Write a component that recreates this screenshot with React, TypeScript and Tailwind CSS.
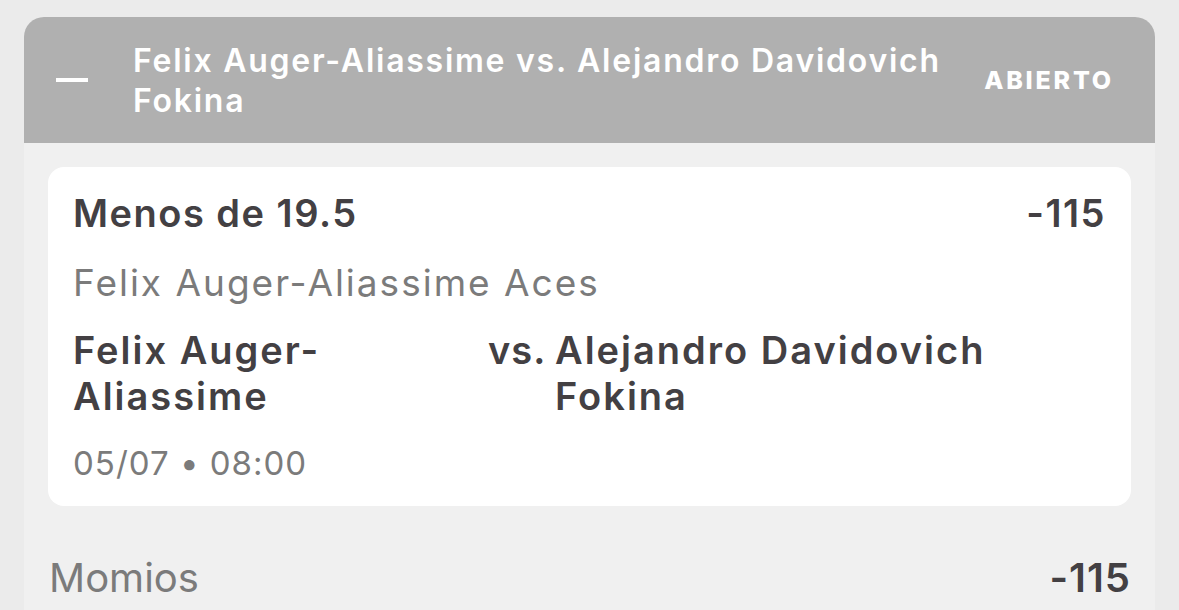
import React from "react";

const pick = {
  line: "Menos de 19.5",
  odds: "-115",
  market: "Felix Auger-Aliassime Aces",
  home: "Felix Auger-Aliassime",
  away: "Alejandro Davidovich Fokina",
  date: "05/07 • 08:00",
};

export default function App() {
  return (
    <div
      className="min-h-[610px] bg-[#ebebeb] px-[24px] pt-[17px]"
      style={{ fontFamily: "Inter, 'Noto Sans', sans-serif" }}
    >
      <div className="overflow-hidden rounded-t-[20px] bg-[#f0f0f0]">
        {/* header bar */}
        <div className="flex h-[126px] items-center bg-[#b0b0b0] pr-[41px] text-white">
          <div className="ml-[32px] h-[4px] w-[32px] bg-white" />
          <div className="ml-[45px] w-[840px] pt-[2px] text-[32px] font-semibold leading-[40px] tracking-[1.75px]">
            Felix Auger-Aliassime vs. Alejandro Davidovich Fokina
          </div>
          <div className="ml-auto pt-[2px] text-[25px] font-extrabold tracking-[2.8px]">ABIERTO</div>
        </div>

        {/* selection card */}
        <div className="px-[24px] pt-[24px]">
          <div className="rounded-[16px] bg-white px-[25px] pb-[23px] pt-[24px] text-[#434043]">
            <div className="flex items-center justify-between text-[38px] font-semibold leading-[44px] tracking-[1.5px]">
              <span>{pick.line}</span>
              <span>{pick.odds}</span>
            </div>
            <div className="mt-[26px] text-[37px] leading-[44px] tracking-[2px] text-[#7b7b7b]">
              {pick.market}
            </div>
            <div className="mt-[22px] flex text-[38px] font-semibold leading-[46px] tracking-[2px]">
              <div className="w-[400px] shrink-0">{pick.home}</div>
              <div className="ml-[15px] flex">
                <span className="w-[67px] shrink-0 tracking-[1px]">vs.</span>
                <span className="w-[450px]">{pick.away}</span>
              </div>
            </div>
            <div className="mt-[24px] text-[33px] leading-[40px] tracking-[1px] text-[#7b7b7b]">{pick.date}</div>
          </div>
        </div>

        {/* moneyline row */}
        <div className="flex items-center justify-between pb-[10px] pl-[25px] pr-[24px] pt-[48px]">
          <span className="text-[40px] leading-[48px] text-[#7b7b7b]">Momios</span>
          <span className="text-[40px] font-semibold leading-[48px] tracking-[1px] text-[#434043]">-115</span>
        </div>
      </div>
    </div>
  );
}
